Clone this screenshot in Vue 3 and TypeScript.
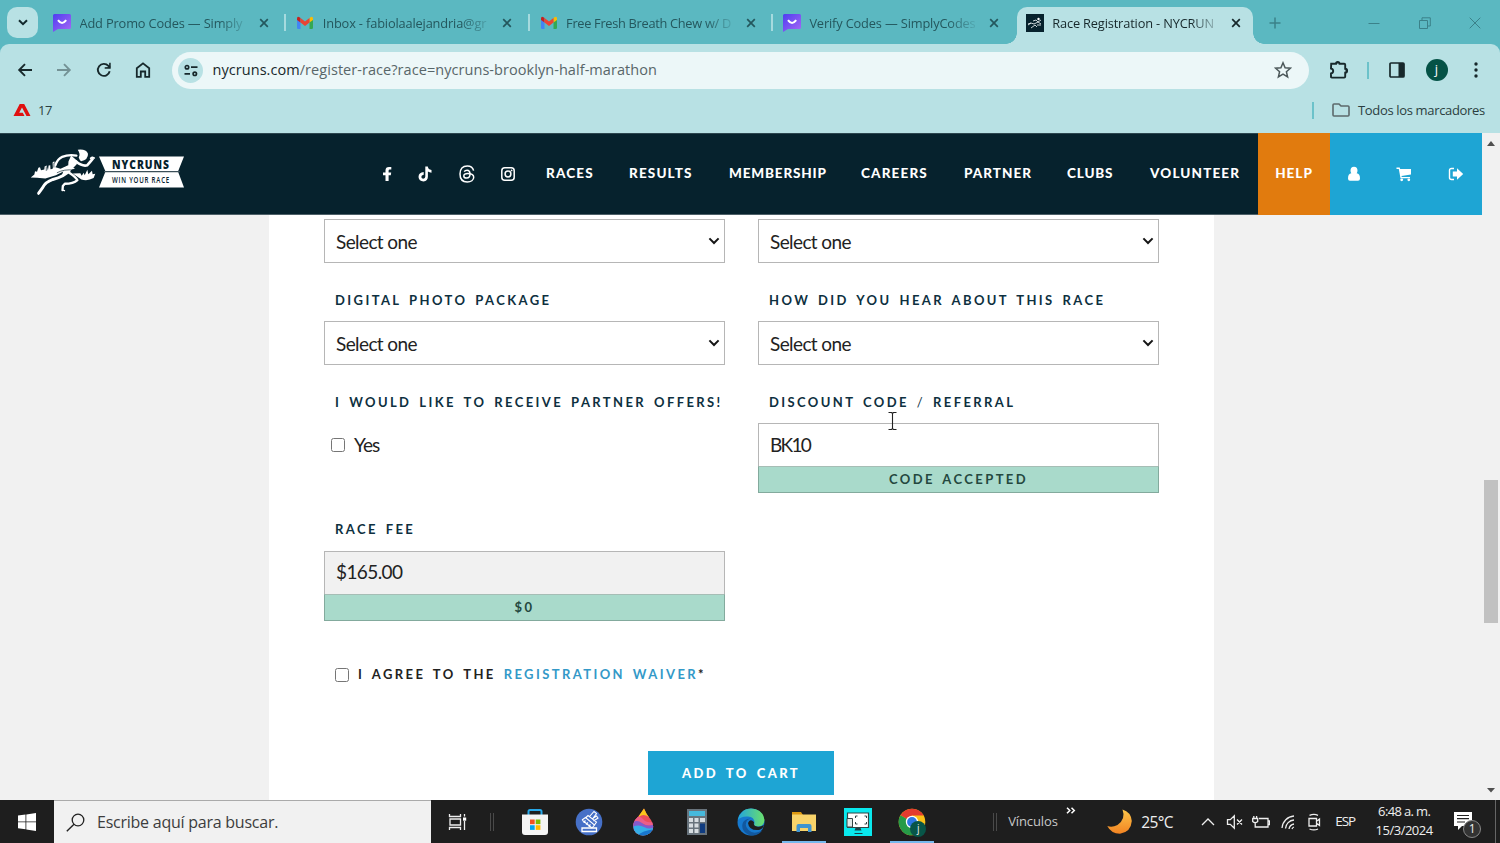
<script setup lang="ts">
import { ref } from 'vue'

interface Tab {
  title: string
  kind: 'simply' | 'gmail' | 'race'
}

const tabs: Tab[] = [
  { title: 'Add Promo Codes — Simply', kind: 'simply' },
  { title: 'Inbox - fabiolaalejandria@gr', kind: 'gmail' },
  { title: 'Free Fresh Breath Chew w/ D', kind: 'gmail' },
  { title: 'Verify Codes — SimplyCodes', kind: 'simply' },
  { title: 'Race Registration - NYCRUN', kind: 'race' },
]

const links: string[] = ['RACES', 'RESULTS', 'MEMBERSHIP', 'CAREERS', 'PARTNER', 'CLUBS', 'VOLUNTEER']

const discount = ref('BK10')
const fee = ref('$165.00')
const offers = ref(false)
const waiver = ref(false)
</script>

<template>
  <div class="screen">
    <header class="tabstrip">
      <button class="tab-search">
        <svg width="10" height="7" viewBox="0 0 10 7"><path d="M1 1.2l4 4 4-4" fill="none" stroke="#12292d" stroke-width="2" /></svg>
      </button>
      <div v-for="(tab, i) in tabs" :key="i" class="tab" :class="{ active: tab.kind === 'race', split: i < 3, wide: i === 2 }">
        <svg v-if="tab.kind === 'simply'" class="fav" viewBox="0 0 18 18">
          <defs><linearGradient id="sg" x1="0" y1="0" x2="1" y2="1"><stop offset="0" stop-color="#4d3df0" /><stop offset="1" stop-color="#a869f5" /></linearGradient></defs>
          <path d="M1.5 0h15Q18 0 18 1.5v12Q18 15 16.500 15H5L0 18V1.500Q0 0 1.500 0z" fill="url(#sg)" />
          <path d="M5 6.200q4 5.500 8.200 0" fill="none" stroke="#fff" stroke-width="2" />
        </svg>
        <svg v-else-if="tab.kind === 'gmail'" class="fav" viewBox="0 0 18 18">
          <path d="M1 5l3.500 2.500V15H2.200Q1 15 1 13.800z" fill="#4285f4" />
          <path d="M17 5l-3.500 2.500V15h2.300q1.200 0 1.200-1.200z" fill="#34a853" />
          <path d="M13.500 4l1-.8Q17 2 17 4.500V6l-3.500 2.600z" fill="#fbbc04" />
          <path d="M4.500 4l-1-.8Q1 2 1 4.500V6l3.500 2.600z" fill="#c5221f" />
          <path d="M4.500 4L9 7.400 13.500 4v4.600L9 12 4.500 8.600z" fill="#ea4335" />
        </svg>
        <svg v-else class="fav" viewBox="0 0 18 18">
          <rect width="18" height="18" fill="#06222d" />
          <path d="M2 11l3-2 3 1 4-2 3 2M7 7l3-1 2 2 3-2M5 14l4-3 2 2M2 10l3-1M11 11l4 0" fill="none" stroke="#dfe7e9" stroke-width=".9" />
          <circle cx="12.500" cy="5" r="1.200" fill="#fff" />
        </svg>
        <span class="tab-title">{{ tab.title }}</span>
        <svg class="close" viewBox="0 0 10 10"><path d="M1.200 1.200l7.600 7.600M8.800 1.200L1.200 8.800" stroke="currentColor" stroke-width="1.700" /></svg>
      </div>
      <svg class="plus" viewBox="0 0 12 12"><path d="M6 .5v11M.5 6h11" stroke="#3b8189" stroke-width="1.500" /></svg>
      <div class="window-buttons">
        <svg width="12" height="12"><path d="M.5 6.500h11" stroke="#3b8189" /></svg>
        <svg width="12" height="12"><path d="M.5 3.500h8v8h-8zM3 3V.8h8.300V9H9" fill="none" stroke="#3b8189" /></svg>
        <svg width="12" height="12"><path d="M.7.7l10.600 10.600M11.300.7L.7 11.300" stroke="#3b8189" /></svg>
      </div>
    </header>

    <div class="toolbar">
      <svg class="tb" viewBox="0 0 16 16"><path d="M15 8H2.500M8 2.200L2.200 8 8 13.800" fill="none" stroke="#17282b" stroke-width="1.900" /></svg>
      <svg class="tb faded" viewBox="0 0 16 16"><path d="M1 8h12.500M8 2.200L13.800 8 8 13.800" fill="none" stroke="#17282b" stroke-width="1.900" /></svg>
      <svg class="tb" viewBox="0 0 16 16"><path d="M13.700 9.300A6 6 0 1 1 12.400 3.900L14 5.600" fill="none" stroke="#17282b" stroke-width="1.900" /><path d="M14.700.8v6H8.700v-1.500l4.300-.3.200-4.200z" fill="#17282b" /></svg>
      <svg class="tb" viewBox="0 0 16 16"><path d="M1.800 6.300L8 1.400l6.200 4.900v8.600h-4V9.500H5.800v5.400h-4z" fill="none" stroke="#17282b" stroke-width="1.800" /></svg>
      <div class="omnibox">
        <span class="site-info">
          <svg width="14" height="13" viewBox="0 0 14 13"><g fill="none" stroke="#17282b" stroke-width="1.700"><circle cx="3" cy="3.200" r="1.700" /><path d="M7 3.200h6.500M.5 9.800H6" /><circle cx="10.800" cy="9.800" r="1.700" /></g></svg>
        </span>
        <span class="url"><b>nycruns.com</b>/register-race?race=nycruns-brooklyn-half-marathon</span>
        <svg class="star" viewBox="0 0 18 18"><path d="M9 1.800l2.100 4.900 5.300.5-4 3.500 1.200 5.200L9 13.100l-4.600 2.800 1.200-5.200-4-3.500 5.300-.5z" fill="none" stroke="#4c585a" stroke-width="1.500" /></svg>
      </div>
      <svg class="puzzle" viewBox="0 0 20 20"><path d="M2.200 3.800H7a1.800 1.800 0 0 1 3.600 0h4.600q1 0 1 1v4a1.900 1.900 0 0 1 0 3.800v4q0 1-1 1H2.800q-.8 0-.8-.8v-3.300q2.200-.4 2.200-2.500T2 8.500z" fill="none" stroke="#17282b" stroke-width="1.900" /><path d="M7 3.500a1.800 1.800 0 0 1 3.600 0zM16.500 8.800a1.900 1.900 0 0 1 0 3.800z" fill="#17282b" /></svg>
      <i class="rule"></i>
      <svg class="panel-icon" viewBox="0 0 16 16"><rect x="1" y="1" width="14" height="14" rx="1" fill="none" stroke="#17282b" stroke-width="1.700" /><path d="M9.500 1H15v14H9.500z" fill="#17282b" /></svg>
      <span class="avatar">j</span>
      <svg class="dots" viewBox="0 0 4 16"><g fill="#17282b"><circle cx="2" cy="2" r="1.700" /><circle cx="2" cy="8" r="1.700" /><circle cx="2" cy="14" r="1.700" /></g></svg>
    </div>

    <div class="bookmarks">
      <svg class="adobe" viewBox="0 0 18 14"><path d="M6.700 1h4.500L17.500 13h-4L9 4.500 6.200 9.800h3.600L11.500 13H.5z" fill="#e01010" /></svg>
      <span class="bm-name">17</span>
      <i class="rule"></i>
      <svg class="folder" viewBox="0 0 18 14"><path d="M1 2q0-1 1-1h5l2 2h7q1 0 1 1v8q0 1-1 1H2q-1 0-1-1z" fill="none" stroke="#5c696b" stroke-width="1.600" /></svg>
      <span class="bm-all">Todos los marcadores</span>
    </div>

    <div class="viewport">
      <div class="site">
        <nav class="nav">
          <svg class="runner" viewBox="90 55 200 145">
            <g fill="none" stroke="#fff" stroke-linecap="round" stroke-linejoin="round">
              <path d="M229 78Q205 74 186 82 172 88 165 108" stroke-width="7" />
              <path d="M228 96Q248 112 262 107 270 98 278 88" stroke-width="8" />
              <path d="M272 86l5-3 6 2" stroke-width="5" />
              <path d="M207 124Q194 140 158 150 135 158 127 175L115 191" stroke-width="9" />
              <path d="M205 128Q228 143 232 152 220 163 194 163L188 170 187 182" stroke-width="7" />
              <path d="M187 182l6 2M114 192l0 3" stroke-width="4" />
            </g>
            <path d="M233 60Q258 57 264 72 265 90 243 95 238 91 236 84 242 73 233 60z" fill="#fff" />
            <path d="M213 78L232 94 230 104 206 129 185 138 190 123 204 112 205 96z" fill="#fff" />
            <path d="M91 144L102 135 104 125 110 127 114 115 119 113 122 122 132 120 133 111 139 108 143 123 145 108 150 107 151 119 158 117 157 99 162 95 166 113 181 118 204 107 225 118 214 120 194 124 167 137 135 147 110 145z" fill="#fff" />
            <path d="M218 132L241 131 245 139 251 130 254 137 262 121 265 134 276 124 278 134 286 133 281 146Q262 156 244 150z" fill="#fff" />
            <path d="M170 130Q192 118 222 122M138 111v13M153 109v10M161 100v14" fill="none" stroke="#06222d" stroke-width="2" />
          </svg>
          <svg class="ribbon" viewBox="0 0 85 32">
            <path d="M0 .5h85L79 15.500 85 31.500H0L6.500 15.500z" fill="#fff" />
            <path d="M5 15.600h76" stroke="#3c5059" stroke-width="1.200" />
            <text x="13" y="12.800" textLength="58" lengthAdjust="spacingAndGlyphs" class="brand">NYCRUNS</text>
            <text x="13" y="26.800" textLength="58" lengthAdjust="spacingAndGlyphs" class="motto">WIN YOUR RACE</text>
          </svg>
          <div class="social">
            <svg width="10" height="16" viewBox="0 0 10 16"><path d="M9.300 1v2.600H7.800q-1.200 0-1.200 1.200v1.700h2.600L8.800 9.200H6.600V15H3.500V9.200H1V6.500h2.500V4.300Q3.500.9 7 .9z" fill="#fff" /></svg>
            <svg width="14" height="16" viewBox="0 0 14 16"><path d="M7.300.5h2.500q.3 3 3.700 3.500v2.700q-2-.1-3.600-1.200v5q0 4.500-4.400 4.900Q.9 15.200.5 11q.2-4.600 5.200-4.900v2.700Q3.300 9 3.300 10.900q.2 1.700 2 1.800 2-.1 2-2.200z" fill="#fff" /></svg>
            <svg width="16" height="18" viewBox="0 0 16 18"><path d="M14.600 5.600C13.900 2.700 11.700 1 8.300 1 3.700 1 1 3.800 1 9s2.700 8 7.300 8c3.600 0 6.400-1.900 6.400-4.700 0-2.600-2.500-3.900-6-3.900-2.400 0-3.900.9-3.900 2.500 0 1.300 1.200 2.200 2.900 2.200 2.400 0 3.300-1.600 3.300-4 0-2.500-.9-3.900-3-3.900-1.300 0-2.200.5-2.800 1.400" fill="none" stroke="#fff" stroke-width="1.500" /></svg>
            <svg width="14" height="14" viewBox="0 0 14 14"><g fill="none" stroke="#fff" stroke-width="1.500"><rect x=".8" y=".8" width="12.400" height="12.400" rx="3" /><circle cx="7" cy="7" r="2.900" /></g><circle cx="10.600" cy="3.400" r=".9" fill="#fff" /></svg>
          </div>
          <div class="links"><a v-for="link in links" :key="link" :class="link.toLowerCase()">{{ link }}</a></div>
          <a class="help">HELP</a>
          <div class="account">
            <svg width="14" height="16" viewBox="0 0 14 16"><path d="M7 .8q3.500.2 3.500 3.700 0 1.800-.8 2.700Q13 7.500 13 12.500q0 2.300-2 2.300H3q-2 0-2-2.300Q1 7.500 4.300 7.200q-.8-.9-.8-2.700Q3.500 1 7 .8z" fill="#fff" /></svg>
            <svg width="16" height="16" viewBox="0 0 16 16"><path d="M.5 1.500h3.200L4.200 3H15v5.500L5.500 9.900l.2 1.100H14v1.200H4.500L2.800 2.900H.5z" fill="#fff" /><circle cx="5.700" cy="13.800" r="1.400" fill="#fff" /><circle cx="12.800" cy="13.800" r="1.400" fill="#fff" /></svg>
            <svg width="16" height="14" viewBox="0 0 16 14"><path d="M6 1.500H3.500q-2 0-2 2v7q0 2 2 2H6" fill="none" stroke="#fff" stroke-width="1.400" /><path d="M9 1.200L15.200 7 9 12.800V9.500H4.800v-5H9z" fill="#fff" /></svg>
          </div>
        </nav>

        <main class="card">
          <section class="grid">
            <div class="select"><select><option>Select one</option></select><svg viewBox="0 0 12 8"><path d="M1.400 1.400L6 6l4.600-4.600" /></svg></div>
            <div class="select"><select><option>Select one</option></select><svg viewBox="0 0 12 8"><path d="M1.400 1.400L6 6l4.600-4.600" /></svg></div>
            <div class="field">
              <label>DIGITAL PHOTO PACKAGE</label>
              <div class="select"><select><option>Select one</option></select><svg viewBox="0 0 12 8"><path d="M1.400 1.400L6 6l4.600-4.600" /></svg></div>
            </div>
            <div class="field">
              <label>HOW DID YOU HEAR ABOUT THIS RACE</label>
              <div class="select"><select><option>Select one</option></select><svg viewBox="0 0 12 8"><path d="M1.400 1.400L6 6l4.600-4.600" /></svg></div>
            </div>
            <div class="field">
              <label>I WOULD LIKE TO RECEIVE PARTNER OFFERS!</label>
              <div class="check"><input v-model="offers" type="checkbox" /><span>Yes</span></div>
            </div>
            <div class="field">
              <label>DISCOUNT CODE <em>/</em> REFERRAL</label>
              <input v-model="discount" class="text code" />
              <p class="notice">CODE ACCEPTED</p>
            </div>
            <div class="field race-fee">
              <label>RACE FEE</label>
              <input v-model="fee" class="text fee" readonly />
              <p class="notice total">$0</p>
            </div>
          </section>
          <div class="agree">
            <input v-model="waiver" type="checkbox" />
            <span>I AGREE TO THE <a>REGISTRATION WAIVER</a>*</span>
          </div>
          <button class="submit">ADD TO CART</button>
          <svg class="ibeam" viewBox="0 0 9 18"><path d="M.5.500H3.500L4.500 1.500 5.500.500h3M4.500 1.500v15M.5 17.500h3l1-1 1 1h3" fill="none" stroke="#222" stroke-width="1.100" /></svg>
        </main>
      </div>
      <aside class="scrollbar">
        <svg width="8" height="5"><path d="M0 5l4-5 4 5z" fill="#505050" /></svg>
        <i></i>
        <svg width="8" height="5"><path d="M0 0l4 4.500L8 0z" fill="#505050" /></svg>
      </aside>
    </div>

    <footer class="taskbar">
      <div class="start"><svg width="18" height="18" viewBox="0 0 18 18"><path d="M0 2.500l7.500-1v7H0zM8.300 1.400L18 0v8.500H8.300zM0 9.300h7.500v7L0 15.300zM8.300 9.300H18V18l-9.700-1.400z" fill="#fff" /></svg></div>
      <div class="search">
        <svg width="19" height="19" viewBox="0 0 19 19"><circle cx="12" cy="7" r="5.800" fill="none" stroke="#222" stroke-width="1.300" /><path d="M8 11.200L.8 18.200" stroke="#222" stroke-width="1.400" /></svg>
        <span>Escribe aquí para buscar.</span>
      </div>
      <div class="taskview"><svg width="19" height="18" viewBox="0 0 19 18"><path d="M1.500 1v2.500h11V1M1.500 17v-2.500h11V17M2 6h10.500v6H2zM16.500 1v2.500M16.500 8v9" fill="none" stroke="#eee" stroke-width="1.300" /><path d="M15 4.500h3.200v3.200H15z" fill="#fff" /></svg></div>
      <i class="grip"></i>
      <div class="apps">
        <div class="app"><svg viewBox="0 0 28 28"><path d="M7.500 7V3.500Q7.500 2 9 2h10q1.500 0 1.500 1.500V7" fill="none" stroke="#27a7e7" stroke-width="2" /><path d="M1 6.500h26V24q0 3-3 3H4q-3 0-3-3z" fill="#f4f4f4" /><path d="M9 11.500h4.700v4.700H9z" fill="#f25022" /><path d="M14.700 11.500h4.700v4.700h-4.700z" fill="#7fba00" /><path d="M9 17.200h4.700v4.700H9z" fill="#00a4ef" /><path d="M14.700 17.200h4.700v4.700h-4.700z" fill="#ffb900" /></svg></div>
        <div class="app"><svg viewBox="0 0 28 28"><circle cx="14" cy="14" r="13.300" fill="#4670c7" /><path d="M7 20h14.500v3.500H7z" fill="none" stroke="#fff" stroke-width="1.300" /><path d="M7 12l10 8M7 12l3.500-2.500 9 7.500-2.500 3M8.500 14.500l2-2M11 16.500l2-2M13.500 18.500l2-2M11 9.500l2-2 8.500 6.500-2 3M14.500 8.500l4.500-5 2.500 2-4 5.500M17 11l4.500-3 1.500 2-4.500 3" fill="none" stroke="#fff" stroke-width="1.100" /></svg></div>
        <div class="app"><svg viewBox="0 0 28 28"><defs><clipPath id="drop"><path d="M15 .5Q17 6 22 12q5 8-1 13-7 5-14 0-5-6-1-13Q11 7 15 .5z" /></clipPath></defs><g clip-path="url(#drop)"><path d="M0 0h28v28H0z" fill="#ec4f5b" /><path d="M8 0h12v9Q14 5 10 9z" fill="#fac61c" /><path d="M0 15Q9 5 14 11t14 1v5Q20 19 14 16T0 22z" fill="#ed5e88" /><path d="M0 17Q7 10 13 15t15 0v8H0z" fill="#8559ca" /><path d="M0 21q8-6 15-2t13-2v11H0z" fill="#36aee8" /><path d="M8 28q6-6 20-7v7z" fill="#1877ce" /></g></svg></div>
        <div class="app"><svg viewBox="0 0 28 28"><path d="M4 1h20v26H4z" fill="#68737c" /><path d="M6 3h16v5H6z" fill="#46b9dc" /><path d="M6 10h4v4H6zM11.500 10h4v4h-4zM17 10h5v4h-5zM6 15.500h4v4H6zM11.500 15.500h4v4h-4zM6 21h4v4H6zM11.500 21h4v4h-4z" fill="#d7dde1" /><path d="M17 15.500h5V25h-5z" fill="#103c80" /></svg></div>
        <div class="app"><svg viewBox="0 0 28 28"><defs><linearGradient id="edge"><stop offset="0" stop-color="#22a5dd" /><stop offset="1" stop-color="#6be06c" /></linearGradient></defs><circle cx="14" cy="14" r="13.500" fill="#1679cf" /><path d="M.8 12Q3 .7 14 .5 26 1 27.500 12 27 19 20 18.500q-4-.5-2.500-3Q18 9 11 8.500 4 8 .8 12z" fill="url(#edge)" /><path d="M10.500 12q-4 5 1 10 5 5 13.800.5Q20 29 12 27 4 23 5.500 16q1-5 8-5.500z" fill="#12589f" /><path d="M11 15q2-5 6-1-1 4 3 4.500 3 1 7-1.500-1 4-5 5-10 1-11-7z" fill="#1e1e1e" /></svg></div>
        <div class="app running"><svg viewBox="0 0 28 28"><path d="M2 4h9l2 3H2z" fill="#dc9810" /><path d="M2 6.500h24V23H2z" fill="#f8d36a" /><path d="M6.500 24v-6q0-2 2-2h11q2 0 2 2v6H18v-4h-8v4z" fill="#3f94d0" /></svg></div>
        <div class="app"><svg viewBox="0 0 28 28"><path d="M0 0h28v28H0z" fill="#09e9ee" /><path d="M3.500 5h21v14.500h-21z" fill="#fff" stroke="#344" stroke-width="1.200" /><path d="M3 10.500h5.500v8.500H3z" fill="#dfe8e8" stroke="#344" /><path d="M11.500 10V8h2M22.500 10V8h-2M11.500 14v2h2M22.500 14v2h-2" fill="none" stroke="#344" /><path d="M11.500 20h5l1 2.500h-7zM10.500 25h8v1h-8z" fill="#17434b" /></svg></div>
        <div class="app running"><svg viewBox="0 0 28 28"><circle cx="14" cy="14" r="13.300" fill="#fbc116" /><path d="M14 14L2.500 7.300A13.300 13.300 0 0 1 25.600 7.500H14z" fill="#e33b2e" /><path d="M14 14L2.500 7.300A13.300 13.300 0 0 0 14 27.300L18.500 18z" fill="#269b48" /><circle cx="14" cy="14" r="6.200" fill="#fff" /><circle cx="14" cy="14" r="4.900" fill="#2d78e4" /></svg><span>j</span></div>
      </div>
      <i class="grip second"></i>
      <span class="vinculos">Vínculos</span>
      <svg class="more" viewBox="0 0 10 7"><path d="M1 .7l2.800 2.800L1 6.300M5.500.7l2.800 2.800-2.800 2.800" fill="none" stroke="#fff" stroke-width="1.500" /></svg>
      <svg class="moon" viewBox="0 0 25 25"><defs><linearGradient id="mg" x1="0" y1="0" x2="0" y2="1"><stop offset="0" stop-color="#fcc64a" /><stop offset="1" stop-color="#f28322" /></linearGradient></defs><path d="M15.500.5Q24 3 24.800 12 24 23 13 24.700 4 24.500.3 17 5 19 10.500 16 19 10 15.500.5z" fill="url(#mg)" /></svg>
      <span class="temp">25°C</span>
      <div class="tray">
        <svg viewBox="0 0 18 18"><path d="M3 12l6-6 6 6" /></svg>
        <svg viewBox="0 0 18 18"><path d="M1.500 6.700h2.800l4-4v12.600l-4-4H1.500zM11 6.500l5 5M16 6.500l-5 5" /></svg>
        <svg viewBox="0 0 18 18"><path d="M7 5.500h9v8.500H6M16.500 8h1v3.500h-1M1.800 3v3M4.600 3v3M.7 5.500h5v3Q3.200 11 .7 8.500zM3.200 9.500V14h3" /></svg>
        <svg viewBox="0 0 18 18"><path d="M3 15A13 13 0 0 1 15 3M6.500 15.500A9 9 0 0 1 15 7M10 16a6 6 0 0 1 5-5M13 16a3 3 0 0 1 2-2" /></svg>
        <svg viewBox="0 0 18 18"><path d="M4 5.500h7.500v7.500H4zM11.500 8.300L14.500 6v6.500l-3-2.300M4.500 2.300Q9 .5 13 2.300M4.500 16Q9 17.800 13 16" /></svg>
      </div>
      <span class="lang">ESP</span>
      <div class="clock"><span>6:48 a. m.</span><span class="date">15/3/2024</span></div>
      <div class="alerts">
        <svg width="18" height="19" viewBox="0 0 18 19"><path d="M0 0h18v14H8l-4 4v-4H0z" fill="#fff" /><path d="M3 3.500h12M3 6.700h12M3 10h8" stroke="#222" stroke-width="1.200" /></svg>
        <span>1</span>
      </div>
      <i class="peek"></i>
    </footer>
  </div>
</template>

<style>
body { margin: 0; overflow: hidden; }
</style>

<style scoped>
* { box-sizing: border-box; }
svg { display: block; flex: none; }
button { border: 0; padding: 0; }
.screen { width: 1500px; height: 843px; display: flex; flex-direction: column; font-family: "Open Sans", "Noto Sans", sans-serif; white-space: nowrap; overflow: hidden; background: #5bb8c1; }

.tabstrip { height: 44px; flex: none; display: flex; background: #5bb8c1; }
.tab-search { width: 31px; height: 31px; margin: 7px 0 0 7px; border-radius: 10px; background: #b8e1e4; display: grid; place-items: center; }
.tab { width: 243.3px; height: 37px; margin-top: 7px; padding: 0 0 5px 11px; display: flex; align-items: center; color: #24575d; position: relative; }
.tab-search + .tab { margin-left: 4px; }
.tab.split::after { content: ""; position: absolute; right: -1px; top: 7px; width: 2px; height: 17px; background: #a5dade; }
.fav { width: 18px; height: 18px; }
.tab-title { width: 169px; margin-left: 8.500px; font-size: 12.800px; letter-spacing: -0.150px; line-height: 20px; mask-image: linear-gradient(to right, #000 82%, rgba(0, 0, 0, .12) 99%); }
.tab.wide .tab-title { letter-spacing: -0.300px; }
.close { width: 10px; height: 10px; margin-left: 10.500px; }
.tab.active { width: 236px; margin-left: 2px; padding-left: 9px; background: #b8e1e4; border-radius: 10px 10px 0 0; color: #17282b; }
.tab.active .tab-title { margin-left: 8px; }
.tab.active .close { margin-left: 10px; }
.tab.active::before, .tab.active::after { content: ""; position: absolute; bottom: 0; width: 11px; height: 11px; }
.tab.active::before { left: -11px; background: radial-gradient(circle at 0 0, transparent 10.500px, #b8e1e4 11px); }
.tab.active::after { right: -11px; background: radial-gradient(circle at 100% 0, transparent 10.500px, #b8e1e4 11px); }
.plus { width: 12px; height: 12px; margin: 17px 0 0 16px; }
.window-buttons { margin: 17px 19px 0 auto; display: flex; gap: 38.500px; }

.toolbar { height: 52px; flex: none; display: flex; align-items: center; padding: 0 22px 0 17px; background: #b8e1e4; border-radius: 9px 9px 0 0; }
.tb { width: 16px; height: 16px; margin-right: 23.300px; }
.tb.faded { opacity: .42; }
.omnibox { width: 1137px; height: 37px; margin-left: -2.200px; padding: 0 17px 0 6px; border-radius: 19px; background: #ecf7f8; display: flex; align-items: center; }
.site-info { width: 25px; height: 25px; border-radius: 50%; background: #b8e1e4; display: grid; place-items: center; }
.url { margin: -2px 0 0 9.500px; color: #586669; font-size: 14.500px; letter-spacing: .055px; }
.url b { color: #17282b; font-weight: 400; }
.star { width: 18px; height: 18px; margin: -1px 0 0 auto; }
.puzzle { width: 20px; height: 20px; margin: -1px 0 0 20px; }
.rule { width: 2px; height: 17px; background: #6cc2ca; }
.toolbar .rule { margin-left: 17.500px; }
.panel-icon { width: 16px; height: 16px; margin-left: 20px; }
.avatar { width: 22px; height: 22px; margin-left: 21px; border-radius: 50%; background: #045246; color: #fff; font-size: 13px; line-height: 20px; text-align: center; }
.dots { width: 4px; height: 16px; margin-left: auto; }

.bookmarks { height: 37px; flex: none; display: flex; align-items: center; padding: 0 15px 9px 13px; background: #b8e1e4; color: #2b3e40; font-size: 13px; }
.adobe { width: 18px; height: 14px; }
.bm-name { margin: -1px 0 0 7px; letter-spacing: -0.500px; }
.bookmarks .rule { margin-left: auto; }
.folder { width: 18px; height: 14px; margin: 0 8px 0 18px; }
.bm-all { width: 127px; margin-top: -1px; letter-spacing: -0.340px; }

.viewport { height: 667px; flex: none; display: flex; background: #f1f1f1; }
.site { width: 1482px; font-family: Lato, sans-serif; }
.nav { height: 82px; display: flex; align-items: center; background: #06222d; border-top: 1px solid #2c464f; border-bottom: 1px solid #4d6068; color: #fff; font-size: 13.500px; font-weight: 900; letter-spacing: 1.150px; }
.runner { width: 67px; height: 48px; margin: -4px 0 0 30px; }
.ribbon { width: 85px; height: 32px; margin: -4px 0 0 2px; overflow: visible; }
.brand { font: 800 12px "Open Sans", sans-serif; fill: #06222d; }
.motto { font: 600 9px "Open Sans", sans-serif; fill: #06222d; }
.social { margin-left: 198px; width: 133px; display: flex; justify-content: space-between; align-items: center; }
.links { margin: -2px 0 0 31px; display: grid; grid-template-columns: 83px 100px 132px 103px 103px 83px 108px; }
.links .membership, .links .clubs { letter-spacing: .850px; }
.links .partner { letter-spacing: 1px; }
.help { width: 72px; height: 82px; line-height: 80px; text-align: center; letter-spacing: 1px; background: #e17b0e; }
.account { width: 152px; height: 82px; padding: 0 18.500px 0 17px; display: flex; justify-content: space-between; align-items: center; background: #1ea5d4; }

.card { width: 945px; height: 585px; margin-left: 269px; padding: 4px 55px 0; background: #fff; position: relative; overflow: hidden; }
.grid { display: grid; grid-template-columns: 401px 401px; column-gap: 33px; }
.field { display: flex; flex-direction: column; }
label, .agree, .notice { font-size: 13px; font-weight: 700; letter-spacing: 2.400px; word-spacing: 2.400px; color: #0e3040; }
label { height: 58px; padding: 24px 0 0 11px; line-height: 26px; }
label em { font-style: normal; font-weight: 400; }
.race-fee label { height: 59px; }
.select { height: 44px; position: relative; }
select, .text { width: 100%; height: 44px; margin: 0; border: 1px solid #b6b6b6; border-radius: 0; outline: 0; padding: 1px 10px 0 11px; appearance: none; background: #fff; color: #222; font: 400 19px Lato, sans-serif; letter-spacing: -0.600px; }
.select svg { position: absolute; right: 5px; top: 18px; width: 12px; height: 8px; fill: none; stroke: #151515; stroke-width: 2; }
.text { padding: 0 10px 2px 11px; }
.code { letter-spacing: -1.700px; }
.fee { background: #f1f1f1; letter-spacing: -0.600px; padding-bottom: 3px; }
.notice { height: 27px; margin: -1px 0; border: 1px solid #83aa9d; border-top-color: #a6bdb5; background: #a9dacb; color: #24483f; line-height: 25px; text-align: center; }
.notice.total { line-height: 24px; }
.check { height: 44px; display: flex; align-items: center; padding-left: 7px; font-size: 19px; color: #222; }
.check span { margin: -1px 0 0 9px; letter-spacing: -0.900px; }
input[type="checkbox"] { appearance: none; width: 14px; height: 14px; margin: 0; border: 1px solid #767676; border-radius: 2.500px; background: #fff; flex: none; }
.agree { margin: 42px 0 0 11px; height: 26px; display: flex; align-items: center; color: #222; }
.agree span { margin: -2px 0 0 9px; }
.agree a { color: #3399c8; }
.submit { display: block; width: 186px; height: 44px; margin: 62.500px 0 0 324px; background: #1ea5d4; color: #fff; font: 900 13px Lato, sans-serif; letter-spacing: 2.400px; word-spacing: 2.600px; }
.ibeam { position: absolute; left: 619px; top: 197px; width: 9px; height: 18px; }
.scrollbar { width: 18px; padding: 8px 0 7px; display: flex; flex-direction: column; align-items: center; background: #f1f1f1; }
.scrollbar i { width: 14px; height: 143px; margin: 334px 0 auto; background: #c1c1c1; }

.taskbar { height: 43px; flex: none; display: flex; align-items: center; background: #1e1e1e; color: #eee; }
.start { width: 54px; display: grid; place-items: center; }
.search { width: 377px; height: 43px; display: flex; align-items: center; padding-left: 12px; border-top: 1px solid #aaa; background: #f1f1f1; color: #3d3d3d; font-size: 16px; letter-spacing: -0.240px; }
.search span { margin-left: 12px; }
.taskview { width: 52px; display: grid; place-items: center; }
.grip { width: 4px; height: 18px; margin-left: 7px; border: solid #4a4a4a; border-width: 0 1px; }
.apps { display: flex; margin-left: 14px; }
.app { width: 53.900px; height: 43px; display: grid; place-items: center; position: relative; }
.app > svg { width: 28px; height: 28px; }
.app.running::after { content: ""; position: absolute; left: 5px; right: 5px; bottom: 0; height: 2px; background: #76b9ed; }
.app span { position: absolute; left: 25px; top: 21px; width: 16px; height: 16px; border-radius: 50%; background: #085548; font-size: 10px; line-height: 15px; text-align: center; }
.grip.second { margin-left: 54px; }
.vinculos { width: 58px; margin: -1px 0 0 11px; font-size: 13px; color: #c9c9c9; letter-spacing: -0.100px; }
.more { width: 10px; height: 7px; margin-top: -22px; }
.moon { width: 25px; height: 25px; margin-left: 31px; }
.temp { width: 49px; margin: 0 0 0 9px; font-size: 15.500px; letter-spacing: -0.600px; }
.tray { width: 124px; display: flex; justify-content: space-between; margin-left: 9px; }
.tray svg { width: 18px; height: 18px; fill: none; stroke: #eee; stroke-width: 1.300; }
.lang { width: 38px; margin: -2px 0 0 12px; font-size: 13.500px; letter-spacing: -1px; }
.clock { width: 60px; margin: -1px 0 0 1px; display: flex; flex-direction: column; align-items: center; font-size: 13px; line-height: 19.500px; letter-spacing: -0.650px; }
.clock .date { letter-spacing: -0.500px; }
.alerts { margin-left: 20px; position: relative; }
.alerts span { position: absolute; left: 9px; top: 8px; width: 18px; height: 18px; border: 1px solid #888; border-radius: 50%; background: #333; font-size: 12px; line-height: 16px; text-align: center; }
.peek { width: 1px; height: 43px; margin-left: auto; margin-right: 4px; background: #666; }
</style>
